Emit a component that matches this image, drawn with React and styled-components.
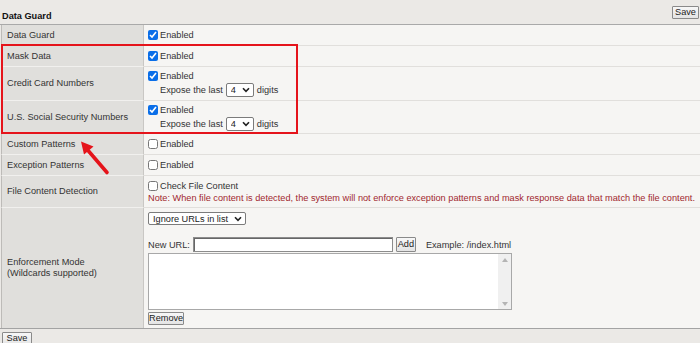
import React from 'react';
import styled, { createGlobalStyle } from 'styled-components';

const Global = createGlobalStyle`
    html, body {
        margin: 0;
        padding: 0;
        background: #ebe9e6;
    }
    * {
        box-sizing: border-box;
    }
`;

const Page = styled.div`
    position: relative;
    width: 700px;
    height: 343px;
    overflow: hidden;
    background: #ebe9e6;
    font-family: "Liberation Sans", Arial, sans-serif;
    font-size: 9.2px;
    color: #333;
`;

const Header = styled.div`
    display: flex;
    justify-content: space-between;
    align-items: flex-start;
    height: 25px;
    padding: 6px 1px 0 2px;
    border-bottom: 1px solid #a9a9a9;
`;

const Title = styled.h2`
    margin: 5px 0 0;
    font-size: 9.2px;
    font-weight: bold;
    color: #111;
`;

const Button = styled.button`
    font-family: inherit;
    font-size: 9.2px;
    color: #222;
    height: ${p => p.h || 13}px;
    width: ${p => p.w}px;
    padding: 0;
    border: 1px solid #8a8a8a;
    border-radius: 1px;
    background: linear-gradient(#f7f7f7, #e4e4e4);
    line-height: 1;
`;

const Table = styled.div`
    display: flex;
    flex-direction: column;
    border-bottom: 1px solid #a3a3a3;
`;

const Row = styled.div`
    display: grid;
    grid-template-columns: 144px 1fr;
    height: ${p => p.h}px;
`;

const Label = styled.div`
    display: flex;
    flex-direction: column;
    justify-content: center;
    margin-left: 1px;
    padding-left: 5px;
    line-height: 11px;
    background: #e0dfdc;
    border-left: 1px solid #bdbbb8;
    border-right: 1px solid #c9c7c4;
    border-bottom: ${p => (p.last ? 'none' : '1px solid #f1f0ee')};
`;

const Value = styled.div`
    display: flex;
    flex-direction: column;
    justify-content: ${p => (p.top ? 'flex-start' : 'center')};
    padding: ${p => (p.top ? '4px 0 0 4px' : '0 0 0 4px')};
    background: #f6f5f3;
    border-bottom: ${p => (p.last ? 'none' : '1px solid #e1dfdc')};
`;

const Line = styled.div`
    display: flex;
    align-items: center;
    height: ${p => p.h || 12}px;
    margin-left: ${p => p.indent || 0}px;
    margin-top: ${p => p.mt || 0}px;
    white-space: nowrap;
`;

const Check = styled.input.attrs({ type: 'checkbox' })`
    width: 10px;
    height: 10px;
    margin: 0 2px 0 0;
    accent-color: #0a6ee8;
`;

const Note = styled.div`
    color: #a1272f;
    line-height: 12px;
    white-space: nowrap;
`;

const SelectWrap = styled.span`
    position: relative;
    display: inline-flex;
    width: ${p => p.w}px;
    height: ${p => p.h || 14}px;
    margin: 0 3px 0 ${p => p.ml || 0}px;
`;

const Select = styled.select`
    appearance: none;
    width: 100%;
    height: 100%;
    padding: 0 0 0 4px;
    font-family: inherit;
    font-size: 9.2px;
    color: #222;
    background: #fff;
    border: 1px solid #7b7b7b;
    border-radius: 2px;
`;

const Chevron = styled.svg`
    position: absolute;
    right: 4px;
    top: 50%;
    width: 8px;
    height: 6px;
    margin-top: -3px;
    pointer-events: none;
`;

const UrlInput = styled.input`
    width: 200px;
    height: 15px;
    margin: 0 3px 0 3px;
    padding: 0 2px;
    border: 1px solid #8c8c8c;
    box-shadow: inset 1px 1px 0 #666;
    background: #fff;
`;

const Example = styled.span`
    margin-left: 10px;
`;

const ListBox = styled.div`
    display: flex;
    width: 364px;
    height: 57px;
    margin: 1px 0 2px;
    border: 1px solid #a8a8a8;
    background: #fff;
`;

const UrlList = styled.textarea`
    flex: 1;
    padding: 2px;
    border: none;
    background: transparent;
    resize: none;
    overflow: hidden;
`;

const ScrollTrack = styled.div`
    display: flex;
    flex-direction: column;
    justify-content: space-between;
    align-items: center;
    width: 13px;
    padding: 4px 0 3px;
    background: #f0f0f0;
`;

const ScrollArrow = styled.svg`
    width: 6px;
    height: 4px;
`;

const Footer = styled.div`
    padding: 3px 0 0 2px;
`;

const Highlight = styled.div`
    position: absolute;
    left: 1px;
    top: 44px;
    width: 297px;
    height: 90px;
    border: 2px solid #e5141b;
    pointer-events: none;
`;

const Arrow = styled.svg`
    position: absolute;
    left: 70px;
    top: 135px;
    width: 45px;
    height: 45px;
    pointer-events: none;
`;

const Dropdown = ({ w, h, ml, value }) => (
    <SelectWrap w={w} h={h} ml={ml}>
        <Select defaultValue={value}>
            <option>{value}</option>
        </Select>
        <Chevron viewBox="0 0 8 6">
            <path d="M1 1.2 L4 4.4 L7 1.2" fill="none" stroke="#222" strokeWidth="1.6" />
        </Chevron>
    </SelectWrap>
);

const Enabled = ({ checked, text = 'Enabled' }) => (
    <Line>
        <Check defaultChecked={checked} />
        {text}
    </Line>
);

const Expose = () => (
    <Line h={14} indent={12} mt={1}>
        Expose the last
        <Dropdown w={28} h={14} ml={3} value="4" />
        digits
    </Line>
);

const App = () => {
    return (
        <Page>
            <Global />
            <Header>
                <Title>Data Guard</Title>
                <Button w={27}>Save</Button>
            </Header>
            <Table>
                <Row h={21}>
                    <Label>Data Guard</Label>
                    <Value><Enabled checked /></Value>
                </Row>
                <Row h={21}>
                    <Label>Mask Data</Label>
                    <Value><Enabled checked /></Value>
                </Row>
                <Row h={34}>
                    <Label>Credit Card Numbers</Label>
                    <Value>
                        <Enabled checked />
                        <Expose />
                    </Value>
                </Row>
                <Row h={33}>
                    <Label>U.S. Social Security Numbers</Label>
                    <Value>
                        <Enabled checked />
                        <Expose />
                    </Value>
                </Row>
                <Row h={21}>
                    <Label>Custom Patterns</Label>
                    <Value><Enabled /></Value>
                </Row>
                <Row h={21}>
                    <Label>Exception Patterns</Label>
                    <Value><Enabled /></Value>
                </Row>
                <Row h={32}>
                    <Label>File Content Detection</Label>
                    <Value>
                        <Enabled text="Check File Content" />
                        <Note>Note: When file content is detected, the system will not enforce exception patterns and mask response data that match the file content.</Note>
                    </Value>
                </Row>
                <Row h={120}>
                    <Label last>
                        <span>Enforcement Mode</span>
                        <span>(Wildcards supported)</span>
                    </Label>
                    <Value top last>
                        <Line h={13}>
                            <Dropdown w={98} h={13} value="Ignore URLs in list" />
                        </Line>
                        <Line h={15} mt={12}>
                            New URL:
                            <UrlInput type="text" />
                            <Button w={20} h={15}>Add</Button>
                            <Example>Example: /index.html</Example>
                        </Line>
                        <ListBox>
                            <UrlList />
                            <ScrollTrack>
                                <ScrollArrow viewBox="0 0 6 4">
                                    <polygon points="3,0 6,4 0,4" fill="#b4b4b4" />
                                </ScrollArrow>
                                <ScrollArrow viewBox="0 0 6 4">
                                    <polygon points="0,0 6,0 3,4" fill="#b4b4b4" />
                                </ScrollArrow>
                            </ScrollTrack>
                        </ListBox>
                        <Button w={36} h={13}>Remove</Button>
                    </Value>
                </Row>
            </Table>
            <Footer>
                <Button w={30} h={14}>Save</Button>
            </Footer>
            <Highlight />
            <Arrow viewBox="70 135 45 45">
                <line x1="107" y1="172.5" x2="88.5" y2="151" stroke="#e5141b" strokeWidth="3.6" strokeLinecap="round" />
                <polygon points="81,141.5 93.5,146.5 84,154.5" fill="#e5141b" />
            </Arrow>
        </Page>
    );
};

export default App;
